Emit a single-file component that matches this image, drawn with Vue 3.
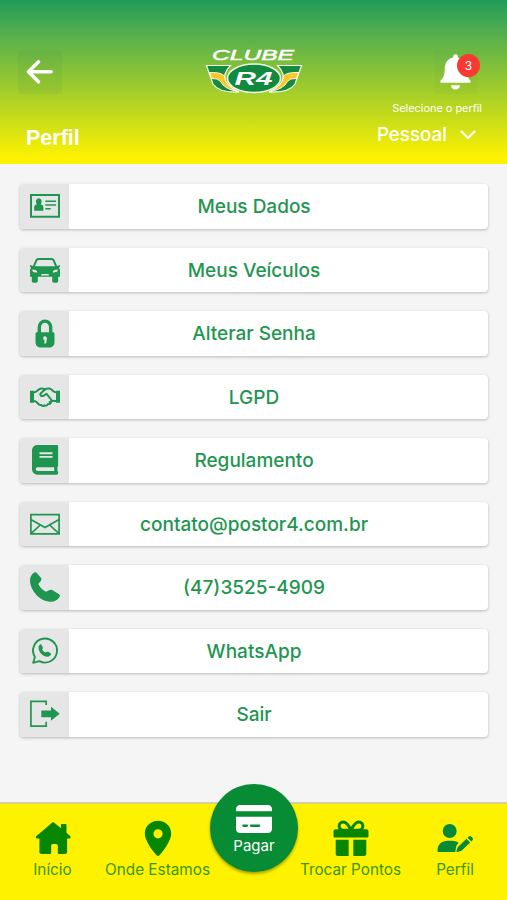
<script setup>
import { ref } from 'vue'

const notifications = ref(3)
const profile = ref('Pessoal')

const items = [
  { id: 'dados', label: 'Meus Dados' },
  { id: 'veiculos', label: 'Meus Veículos' },
  { id: 'senha', label: 'Alterar Senha' },
  { id: 'lgpd', label: 'LGPD' },
  { id: 'regulamento', label: 'Regulamento' },
  { id: 'email', label: 'contato@postor4.com.br' },
  { id: 'telefone', label: '(47)3525-4909' },
  { id: 'whatsapp', label: 'WhatsApp' },
  { id: 'sair', label: 'Sair' },
]
</script>

<template>
  <div class="screen">
    <header class="header">
      <div class="header-top">
        <button class="back" aria-label="Voltar">
          <svg width="44" height="44" viewBox="0 0 44 44">
            <path d="M33 21.8H10.500M20.500 11.800l-10 10 10 10" fill="none" stroke="#fff" stroke-width="3.600" stroke-linecap="round" stroke-linejoin="round" />
          </svg>
        </button>
        <svg class="logo" width="98" height="48" viewBox="0 0 98 48">
          <text x="7" y="14.200" class="logo-name" textLength="82" lengthAdjust="spacingAndGlyphs">CLUBE</text>
          <path d="M1.500 19.500h24Q17 28 21 36 26 43 34 46 14 47 8 38Z" fill="#138a3d" stroke="#f4fae8" stroke-width="1.200" />
          <path d="M96.500 19.500h-24Q81 28 77 36 72 43 64 46 84 47 90 38Z" fill="#138a3d" stroke="#f4fae8" stroke-width="1.200" />
          <path d="M4.500 26.500Q16 26 19.500 30 20 40 34 46 19 43 15.500 35.500 13 32 6.500 32.500Z" fill="#ffc629" stroke="#fff" stroke-width=".9" />
          <path d="M93.500 26.500Q82 26 78.500 30 78 40 64 46 79 43 82.500 35.500 85 32 91.500 32.500Z" fill="#ffc629" stroke="#fff" stroke-width=".9" />
          <ellipse cx="49" cy="32.300" rx="26.500" ry="14.200" fill="#108a3e" stroke="#f4fae8" stroke-width="1.500" />
          <text x="29.500" y="38.500" class="logo-mark" textLength="38" lengthAdjust="spacingAndGlyphs">R4</text>
        </svg>
        <button class="bell" aria-label="Notificações">
          <svg width="44" height="44" viewBox="0 0 44 44">
            <path d="M21.500 4.200a2.300 2.300 0 0 1 2.300 2.300v.9c5.100 1 8.400 5.200 8.400 10.300 0 6.500 1 9.800 4.300 13 .8.900.3 2-1 2H7.500c-1.300 0-1.800-1.100-1-2 3.300-3.200 4.300-6.500 4.300-13 0-5.100 3.300-9.300 8.400-10.300v-.9a2.300 2.300 0 0 1 2.300-2.300zM17 35.200h9c0 2.600-2 4.300-4.500 4.300S17 37.800 17 35.200z" fill="#fff" />
          </svg>
          <span class="badge">{{ notifications }}</span>
        </button>
      </div>
      <div class="header-bottom">
        <h1 class="title">Perfil</h1>
        <div class="profile">
          <span class="profile-hint">Selecione o perfil</span>
          <span class="profile-value">
            {{ profile }}
            <svg width="16" height="10" viewBox="0 0 16 10">
              <path d="M1.500 1.500 8 8l6.500-6.500" fill="none" stroke="#fff" stroke-width="2.300" stroke-linecap="round" stroke-linejoin="round" />
            </svg>
          </span>
        </div>
      </div>
    </header>

    <main class="menu">
      <a v-for="item in items" :key="item.id" class="menu-item">
        <span class="menu-icon">
          <svg width="30" height="30" viewBox="0 0 30 30">
            <g v-if="item.id === 'dados'">
              <path d="M1 4h28v21.800H1z" fill="none" stroke="currentColor" stroke-width="2" />
              <path d="M4.200 19.800v-3.300c0-1.900 1-2.800 2.700-3.200-1.800-2.200-.9-6 1.900-6s3.700 3.800 1.900 6c1.700.4 2.700 1.300 2.700 3.200v3.300z" fill="currentColor" />
              <path d="M15.300 10.200h10.800M15.300 14h10.800M15.300 17.800h5.400" stroke="currentColor" stroke-width="1.600" />
            </g>
            <path
              v-else-if="item.id === 'veiculos'"
              fill="currentColor"
              fill-rule="evenodd"
              d="M8.500 3h13c1.500 0 2.500.7 3.100 2l2.500 6 2.400-.9c.8.500.7 1.900-.6 2.700.9 1 1.100 2.200 1.100 3.700v5.200h-1.800v4.500c0 2-6 2-6 0v-4.500H7.800v4.500c0 2-6 2-6 0v-4.500H0v-5.200c0-1.500.2-2.700 1.100-3.700C-.2 12-.3 10.600.5 10.100l2.400.9 2.500-6c.6-1.300 1.600-2 3.100-2zm.3 2c-.8 0-1.300.3-1.600 1L5 11.200h20L22.800 6c-.3-.7-.8-1-1.600-1zM2.300 14.500c0 2.200.8 3 5 3 0-1.800-1.600-3-5-3zm25.400 0c-3.400 0-5 1.200-5 3 4.200 0 5-.8 5-3zM11.500 18.900l-.5 1.500h8l-.5-1.500z"
            />
            <g v-else-if="item.id === 'senha'">
              <path d="M9.300 16V9.300a5.700 6.200 0 0 1 11.400 0V16" fill="none" stroke="currentColor" stroke-width="3.400" />
              <path fill="currentColor" fill-rule="evenodd" d="M7 14.300h16c1 0 1.500.6 1.500 1.500v8.400c0 3.300-2.600 5.300-5.500 5.300h-8c-2.900 0-5.500-2-5.500-5.300v-8.400c0-.9.500-1.500 1.500-1.500zm8 3.900a2 2 0 0 0-1.500 3.200l1 .8-.2 3.100c.9 1 1.900.4 2-.7l.5-3.700A2 2 0 0 0 15 18.200z" />
            </g>
            <g v-else-if="item.id === 'lgpd'">
              <path d="M0 8.700h4v12H0zM26 8.700h4v12h-4z" fill="currentColor" />
              <path d="M4 10.300c3 .2 4-3.800 7.500-3.800 1.500 0 2.500.3 3.500 1 1-.8 2.300-1.200 4.300-1 3 .3 3.700 3.800 6.700 3.800M4 19c2.300-.1 2.800 1.900 4 2.500.8 1.400 2 1.800 3.200 1.500 1 1.100 2.300 1.200 3.300.4 1.500.6 2.800 0 3.300-1.200 1.700 0 3-.7 3.300-2.400.9-1.500 2.400-.8 4.900-.8" fill="none" stroke="currentColor" stroke-width="2" />
              <path d="M15 7.500 10.500 11.500c-.9 1.900 1 3 2.800 2.300l3.300-2 4.500 5.700c.8 1.300-.4 2.600-1.500 2.400" fill="none" stroke="currentColor" stroke-width="2" stroke-linecap="round" stroke-linejoin="round" />
            </g>
            <path
              v-else-if="item.id === 'regulamento'"
              transform="translate(2 -.2) scale(.0583)"
              fill="currentColor"
              d="M448 360V24c0-13.300-10.700-24-24-24H96C43 0 0 43 0 96v320c0 53 43 96 96 96h328c13.300 0 24-10.700 24-24v-16c0-7.500-3.500-14.300-8.900-18.700-4.200-15.400-4.200-59.300 0-74.700 5.400-4.300 8.900-11.100 8.900-18.600zM128 134c0-3.300 2.700-6 6-6h212c3.300 0 6 2.700 6 6v20c0 3.300-2.700 6-6 6H134c-3.300 0-6-2.700-6-6v-20zm0 64c0-3.300 2.700-6 6-6h212c3.300 0 6 2.700 6 6v20c0 3.300-2.700 6-6 6H134c-3.300 0-6-2.700-6-6v-20zm253.400 250H96c-17.700 0-32-14.300-32-32 0-17.600 14.400-32 32-32h285.400c-1.900 17.100-1.900 46.900 0 64z"
            />
            <path v-else-if="item.id === 'email'" d="M.9 5.700h28.200v19.200H.9zM.9 10.500 15 18.500l14.100-8M1 24.600l9.300-8.600M29 24.600l-9.300-8.600" fill="none" stroke="currentColor" stroke-width="1.700" />
            <path
              v-else-if="item.id === 'telefone'"
              fill="currentColor"
              d="M3.800.7C4.900.1 6.100.1 6.900 1.100l4 4.700c.8 1 .6 2.200-.1 3.100L8.300 12c1.500 3.300 4.200 6.100 7.700 7.700l3-1.500c1.300-.6 2.500-.7 3.600 0l6.500 4.100c1 .8 1.100 1.900.3 3-2 2.800-4.900 4.500-8.200 4.500C10.200 29.800 0 18.500 0 8.200 0 5.200 1.400 2.400 3.800.7z"
            />
            <g v-else-if="item.id === 'whatsapp'">
              <path d="M3.200 26.800 4.900 20.900A12 12 0 1 1 9.400 25.100z" fill="none" stroke="currentColor" stroke-width="1.900" stroke-linejoin="round" />
              <path transform="translate(8.600 8.200) scale(.42)" fill="currentColor" d="M3.500.8C4.700 0 6 .1 6.800 1.100l3 6c.7 1 .5 2-.2 2.900L8.500 12c1.300 3.600 4.300 6.600 7.900 8l3.200-1.900c1.100-.5 2-.6 3 .1l6 3.600c1.200.9 1.300 2.100.4 3.200-2 2.700-4.200 4.800-7.500 4.800C10 29.800 0 18.500 0 8.200 0 5 1 2.700 3.500.8z" />
            </g>
            <g v-else>
              <path d="M16.200 6V2.400H.9v24.800h15.300v-4.400" fill="none" stroke="currentColor" stroke-width="1.700" />
              <path d="M11.300 11.500H21V7.800l8.700 6.900-8.700 7.100v-3.600h-9.700z" fill="currentColor" />
            </g>
          </svg>
        </span>
        <span class="menu-label">{{ item.label }}</span>
      </a>
    </main>

    <nav class="tabs">
      <a class="tab">
        <svg width="36" height="36" viewBox="0 0 36 36">
          <path fill="currentColor" d="M17 2.800c.8-.6 1.600-.6 2.300 0l6.700 5.500V5c0-.6.400-1 1-1h3.500c.6 0 1 .4 1 1v7.700l3.600 3.300c1 1 .4 2.500-.9 2.500h-2.100V32c0 1.200-.8 2-2 2h-6c-.8 0-1.300-.5-1.300-1.300v-6.900c0-1-.8-1.800-1.800-1.800h-3c-1 0-1.800.8-1.800 1.800v6.900c0 .8-.5 1.300-1.300 1.300H6.400c-1.200 0-2-.8-2-2V18.500h-2c-1.500 0-2-1.600-.9-2.600z" />
        </svg>
        <span>Início</span>
      </a>
      <a class="tab">
        <svg width="36" height="36" viewBox="0 0 36 36">
          <path fill="currentColor" fill-rule="evenodd" d="M18 .8c7.500 0 13.200 5.500 13.200 12.900C31.200 20.500 23 31.500 19.500 35.300c-.8.900-2.200.9-3 0C13 31.500 4.800 20.500 4.800 13.700 4.800 6.300 10.500.8 18 .8zm0 8.400a4.600 4.600 0 1 0 0 9.200 4.600 4.600 0 0 0 0-9.200z" />
        </svg>
        <span>Onde Estamos</span>
      </a>
      <a class="pay">
        <svg width="36" height="28" viewBox="0 0 36 28">
          <path fill="#fff" fill-rule="evenodd" d="M4 0h28c2.400 0 4 1.700 4 4v2.200H0V4c0-2.300 1.600-4 4-4zM0 11.800h36V24c0 2.300-1.600 4-4 4H4c-2.400 0-4-1.700-4-4zm7.500 7.700c-1.600 0-1.600 2.400 0 2.400h3.300c1.600 0 1.600-2.400 0-2.400zm7.700 0c-1.600 0-1.600 2.400 0 2.400H23c1.600 0 1.600-2.400 0-2.400z" />
        </svg>
        <span>Pagar</span>
      </a>
      <a class="tab">
        <svg width="36" height="36" viewBox="0 0 36 36">
          <path d="M18 10.200C15.500 5 13.500 2 10.300 2 4.800 2 4.700 10.200 10.300 10.200zm0 0C20.500 5 22.500 2 25.700 2c5.500 0 5.600 8.200 0 8.200z" fill="none" stroke="currentColor" stroke-width="3" />
          <path fill="currentColor" d="M2.700 9.300h30.600c1.300 0 2.200.9 2.200 2.200v4.700c0 .8-.5 1.300-1.300 1.300H1.800c-.8 0-1.300-.5-1.300-1.300v-4.700c0-1.300.9-2.200 2.200-2.200zM2.700 19.800h13V36H5c-1.300 0-2.300-1-2.300-2.300zM20.300 19.800h13v13.900c0 1.300-1 2.300-2.300 2.300H20.300z" />
        </svg>
        <span>Trocar Pontos</span>
      </a>
      <a class="tab tab--profile">
        <svg width="36" height="36" viewBox="0 0 36 36">
          <circle cx="12.700" cy="11" r="7" fill="currentColor" />
          <path fill="currentColor" d="M.5 30.500C.5 24.300 5 20.800 10.300 20.800h5c2.400 0 4.600.7 6.300 2l-1.300 1.600c-.8.800-1 1.700-1.200 2.700l-.8 4.900H2C1 32 .5 31.500.5 30.500zM29.500 18.800l3.600 3.600-8.500 8.400-4.200 1.100c-.8.200-1.200-.2-1-1l1.300-3.700zM30.600 17.700l1-1c.8-.8 2-.8 2.800 0l.9.900c.8.800.8 2 0 2.800l-1 1z" />
        </svg>
        <span>Perfil</span>
      </a>
    </nav>
  </div>
</template>

<style>
body {
  margin: 0;
}
</style>

<style scoped>
.screen {
  width: 507px;
  height: 900px;
  display: flex;
  flex-direction: column;
  overflow: hidden;
  background: #f5f5f5;
  font-family: Inter, 'Liberation Sans', sans-serif;
}

.header {
  box-sizing: border-box;
  height: 164px;
  flex: none;
  padding: 46px 25px 0 18px;
  background: linear-gradient(180deg, #209c59 0%, #51ad50 19%, #fff200 97%);
  color: #ffffff;
}

.header-top {
  display: grid;
  grid-template-columns: 187px 98px 1fr;
  align-items: start;
}

.back,
.bell {
  width: 44px;
  height: 44px;
  margin-top: 4px;
  padding: 0;
  border: 0;
  border-radius: 3px;
  background: rgba(70, 150, 70, 0.12);
}

.back svg,
.bell svg {
  display: block;
}

.bell {
  position: relative;
  justify-self: end;
  margin-right: 4px;
  background: rgba(70, 150, 70, 0.06);
}

.badge {
  position: absolute;
  top: 4px;
  right: -2px;
  width: 23px;
  height: 23px;
  border-radius: 50%;
  background: #f93a32;
  color: #ffffff;
  font-family: Inter, sans-serif;
  font-size: 12px;
  line-height: 23px;
  text-align: center;
}

.logo-name,
.logo-mark {
  fill: #ffffff;
  font-family: 'Liberation Sans', sans-serif;
  font-style: italic;
}

.logo-name {
  font-size: 15px;
  stroke: #ffffff;
  stroke-width: 0.5px;
}

.logo-mark {
  font-size: 19px;
  font-weight: 700;
}

.header-bottom {
  display: flex;
  justify-content: space-between;
}

.title {
  margin: 31px 0 0 8px;
  font-family: 'Liberation Sans', sans-serif;
  font-size: 21.500px;
  line-height: 26px;
  font-weight: 700;
}

.profile {
  display: flex;
  flex-direction: column;
  align-items: flex-end;
  padding-top: 7px;
}

.profile-hint {
  font-size: 10.900px;
  line-height: 14px;
}

.profile-value {
  display: flex;
  align-items: center;
  gap: 13px;
  margin-right: 6px;
  padding-top: 8px;
  font-size: 18.800px;
  line-height: 24px;
  font-weight: 500;
}

.menu {
  flex: 1;
  display: flex;
  flex-direction: column;
  gap: 19px;
  padding: 20px 19px 0 20px;
}

.menu-item {
  display: flex;
  height: 44.500px;
  border-radius: 4px;
  overflow: hidden;
  background: #ffffff;
  box-shadow: 0 1px 3px rgba(60, 75, 80, 0.35);
  color: #1f9650;
}

.menu-icon {
  flex: none;
  width: 49px;
  display: flex;
  align-items: center;
  justify-content: center;
  background: #e6e6e6;
}

.menu-label {
  flex: 1;
  padding-right: 49px;
  font-size: 19px;
  line-height: 46px;
  font-weight: 500;
  text-align: center;
}

.tabs {
  position: relative;
  box-sizing: border-box;
  height: 98px;
  flex: none;
  display: grid;
  grid-template-columns: 105px 105px 88px 105px 104px;
  border-top: 2px solid #d5d19c;
  background: #fff200;
}

.tab {
  display: flex;
  flex-direction: column;
  align-items: center;
  padding-top: 16px;
  color: #078600;
  font-size: 15.300px;
  line-height: 20px;
  white-space: nowrap;
}

.tab span {
  margin-top: 4px;
  color: #3b9608;
}

.tab--profile {
  color: #068a35;
}

.pay {
  box-sizing: border-box;
  width: 88px;
  height: 88px;
  margin-top: -20px;
  padding-top: 21px;
  border-radius: 50%;
  display: flex;
  flex-direction: column;
  align-items: center;
  gap: 3px;
  background: #078b35;
  box-shadow: 0 2px 3px rgba(50, 70, 0, 0.45);
  color: #ffffff;
  font-size: 15px;
  line-height: 20px;
}
</style>
